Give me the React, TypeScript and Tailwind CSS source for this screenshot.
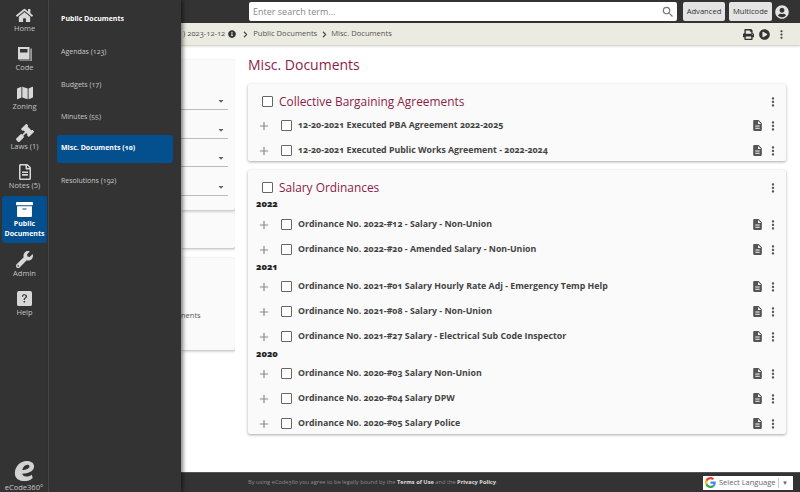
import React from "react";
import { FaHome, FaMap, FaGavel, FaRegFileAlt, FaArchive, FaWrench, FaUserCircle, FaChevronRight, FaPrint, FaPlayCircle, FaInfoCircle, FaCaretDown } from "react-icons/fa";
import { BsQuestionSquareFill } from "react-icons/bs";
import { MdAdd, MdDescription, MdMoreVert, MdSearch } from "react-icons/md";

const font = { fontFamily: '"Open Sans", "Noto Sans", sans-serif' };

function BookIcon() {
  return (
    <svg viewBox="0 0 16 16" className="w-[16px] h-[16px]">
      <path fill="#d8d8d8" d="M1 1h11.5v12.5H1z" />
      <path fill="#9a9a9a" d="M13.2 2.5H15V15H2.5v-.8h10.7z" />
      <path fill="#333" d="M3 3h7.5v3.5H3z" />
    </svg>
  );
}

function Logo() {
  return (
    <svg viewBox="0 0 24 24" className="w-[22px] h-[22px]">
      <path fill="#d2d2d2" d="M15 1c5 0 8 2.500 8 6 0 5-6 7.500-13 8 .6 2 2 3 4.500 3 2.500 0 4.500-.8 6-2l1 3.500C19 21.800 16 23 12 23 6 23 2 19.800 2 14.500 2 7 8 1 15 1z" />
      <path fill="#333" d="M10 11c4.500-.4 8-2 8-4 0-1.200-1-1.800-2.500-1.800C13 5.200 10.800 7.500 10 11z" />
    </svg>
  );
}

function NavItem({ icon, label, h, active }: { icon: React.ReactNode; label: React.ReactNode; h: string; active?: boolean }) {
  return (
    <div className={`flex flex-col items-center justify-center rounded-[3px] mx-[2px] w-[45px] ${h} ${active ? "bg-[#04508f] text-white font-bold" : "text-[#c4c4c4]"}`}>
      <div className="h-[18px] flex items-center justify-center">{icon}</div>
      <div className={`text-center ${active ? "text-[7px] mt-[1px] leading-[10px]" : "text-[7.500px] leading-[9.500px]"}`}>{label}</div>
    </div>
  );
}

function Row({ text }: { text: string }) {
  return (
    <div className="flex items-center h-[25px] pl-[9px] pr-[6px]">
      <MdAdd className="text-[#8a8a8a] text-[14px] w-[14px]" />
      <div className="w-[11px] h-[11px] border border-[#666] rounded-[1px] ml-[10px] bg-white" />
      <div className="ml-[6px] flex-1 text-[8.800px] font-bold text-[#444] oldstyle-nums whitespace-nowrap">{text}</div>
      <MdDescription className="text-[#555] text-[13px]" />
      <MdMoreVert className="text-[#555] text-[14px] ml-[2px]" />
    </div>
  );
}

function Year({ y, h }: { y: string; h: string }) {
  return <div className={`${h} leading-[10px] pl-[8px] text-[9px] font-extrabold text-[#222] oldstyle-nums`}>{y}</div>;
}

function CardHead({ title }: { title: string }) {
  return (
    <div className="flex items-center pl-[14px] pr-[6px] h-[34px] pt-[1px] mb-[-5px]">
      <div className="w-[11px] h-[11px] border border-[#666] rounded-[1px] bg-white" />
      <div className="ml-[6px] flex-1 text-[11.900px] text-[#8c1d47]">{title}</div>
      <MdMoreVert className="text-[#555] text-[14px]" />
    </div>
  );
}

function Peek({ h, children, cls = "" }: { h: string; children?: React.ReactNode; cls?: string }) {
  return <div className={`bg-[#fafafa] shadow-[1px_1px_3px_rgba(0,0,0,0.3)] rounded-r-[2px] ${h} ${cls}`}>{children}</div>;
}

function Select() {
  return (
    <div className="h-[28.400px] pr-[7px] flex flex-col justify-end">
      <div className="flex justify-end pr-[3px]"><FaCaretDown className="text-[#666] text-[8px]" /></div>
      <div className="h-px bg-[#bbb] mt-[4px]" />
    </div>
  );
}

export default function App() {
  return (
    <div className="flex w-[800px] h-[492px] overflow-hidden bg-white relative" style={font}>
      <aside className="w-[49px] shrink-0 bg-[#333333] border-r border-[#4a4a4a] flex flex-col z-10">
        <div className="h-[196px] flex flex-col pt-[1px]">
          <NavItem h="h-[37.500px]" icon={<FaHome className="text-[#d8d8d8] text-[17px]" />} label="Home" />
          <NavItem h="h-[39.500px]" icon={<BookIcon />} label="Code" />
          <NavItem h="h-[39.500px]" icon={<FaMap className="text-[#d8d8d8] text-[16px]" />} label="Zoning" />
          <NavItem h="h-[39.500px]" icon={<FaGavel className="text-[#d8d8d8] text-[18px]" />} label="Laws (1)" />
          <NavItem h="h-[39px]" icon={<FaRegFileAlt className="text-[#d8d8d8] text-[16px]" />} label="Notes (5)" />
        </div>
        <NavItem active h="h-[47px]" icon={<FaArchive className="text-white text-[17px]" />} label={<>Public<br />Documents</>} />
        <div className="flex flex-col pt-[2px]">
          <NavItem h="h-[39px]" icon={<FaWrench className="text-[#d8d8d8] text-[17px]" />} label="Admin" />
          <NavItem h="h-[39px]" icon={<BsQuestionSquareFill className="text-[#d8d8d8] text-[15px]" />} label="Help" />
        </div>
        <div className="mt-auto flex flex-col items-center text-[#c9c9c9]">
          <Logo />
          <div className="text-[7.500px] leading-[10px]">eCode360°</div>
        </div>
      </aside>

      <nav className="w-[132px] shrink-0 bg-[#333333] shadow-[2px_0_4px_rgba(0,0,0,0.5)] z-10 flex flex-col pl-[8px] pr-[8px] text-[#c8c8c8] text-[7px] oldstyle-nums">
        <div className="h-[38px] flex items-center pl-[4px] pt-[1px] font-bold text-white">Public Documents</div>
        <div className="h-[32.500px] flex items-center pl-[4px] mt-[-2px]">Agendas (123)</div>
        <div className="h-[32.500px] flex items-center pl-[4px]">Budgets (17)</div>
        <div className="h-[32.500px] flex items-center pl-[4px]">Minutes (55)</div>
        <div className="h-[28px] mt-[1px] flex items-center pl-[4px] rounded-[3px] bg-[#04508f] text-white font-bold">Misc. Documents (10)</div>
        <div className="h-[38px] flex items-center pl-[4px]">Resolutions (192)</div>
      </nav>

      <div className="flex-1 min-w-0 flex flex-col">
        <header className="h-[23px] shrink-0 bg-[#333333] flex items-center pl-[68px] pr-[10px]">
          <div className="w-[428px] h-[19px] bg-white rounded-[2px] flex items-center pl-[4px] pr-[2px] text-[9px] text-[#888]">
            <span className="flex-1">Enter search term...</span>
            <MdSearch className="text-[#777] text-[14px]" />
          </div>
          <div className="ml-[6px] w-[42px] h-[19px] bg-[#e4e4e4] rounded-[2px] flex items-center justify-center text-[7.600px] text-[#333]">Advanced</div>
          <div className="ml-[4px] w-[43px] h-[19px] bg-[#e4e4e4] rounded-[2px] flex items-center justify-center text-[7.600px] text-[#333]">Multicode</div>
          <FaUserCircle className="ml-[3px] text-[#e4e4e4] text-[14px]" />
        </header>
        <div className="h-[23px] shrink-0 bg-[#ecebe1] border-b border-[#d5d5cc] shadow-[0_1px_2px_rgba(0,0,0,0.1)] flex items-center pl-[2px] pr-[12px] text-[7.600px] text-[#555] oldstyle-nums">
          <span>)</span>
          <span className="ml-[2px]">2023-12-12</span>
          <FaInfoCircle className="ml-[3px] text-[#333] text-[8px]" />
          <FaChevronRight className="ml-[6px] text-[#444] text-[7px]" />
          <span className="ml-[4px]">Public Documents</span>
          <FaChevronRight className="ml-[4px] text-[#444] text-[7px]" />
          <span className="ml-[3px]">Misc. Documents</span>
          <div className="flex-1" />
          <FaPrint className="text-[#333] text-[11px]" />
          <FaPlayCircle className="ml-[5px] text-[#333] text-[11px]" />
          <MdMoreVert className="ml-[5px] text-[#444] text-[13px]" />
        </div>

        <main className="flex-1 min-h-0 flex">
          <div className="w-[54px] shrink-0 pt-[14px] flex flex-col overflow-hidden">
            <Peek h="h-[150px]" cls="pt-[22px]">
              <Select /><Select /><Select /><Select />
            </Peek>
            <Peek h="h-[35px]" cls="mt-[3px]" />
            <Peek h="h-[92px]" cls="mt-[10px] pt-[52px] text-[7.500px] text-[#555]">
              <span>nents</span>
            </Peek>
          </div>
          <div className="flex-1 min-w-0 pl-[13px] pr-[14px]">
            <h1 className="text-[14px] leading-[20px] mt-[9px] text-[#8c1d47] font-normal">Misc. Documents</h1>
            <section className="mt-[9px] h-[77px] bg-[#fafafa] shadow-[0_1px_3px_rgba(0,0,0,0.35)] rounded-[2px]">
              <CardHead title="Collective Bargaining Agreements" />
              <Row text="12-20-2021 Executed PBA Agreement 2022-2025" />
              <Row text="12-20-2021 Executed Public Works Agreement - 2022-2024" />
            </section>
            <section className="mt-[9px] h-[264px] bg-[#fafafa] shadow-[0_1px_3px_rgba(0,0,0,0.35)] rounded-[2px]">
              <CardHead title="Salary Ordinances" />
              <Year y="2022" h="h-[13px]" />
              <Row text="Ordinance No. 2022-#12 - Salary - Non-Union" />
              <Row text="Ordinance No. 2022-#20 - Amended Salary - Non-Union" />
              <Year y="2021" h="h-[12px]" />
              <Row text="Ordinance No. 2021-#01 Salary Hourly Rate Adj - Emergency Temp Help" />
              <Row text="Ordinance No. 2021-#08 - Salary - Non-Union" />
              <Row text="Ordinance No. 2021-#27 Salary - Electrical Sub Code Inspector" />
              <Year y="2020" h="h-[12px]" />
              <Row text="Ordinance No. 2020-#03 Salary Non-Union" />
              <Row text="Ordinance No. 2020-#04 Salary DPW" />
              <Row text="Ordinance No. 2020-#05 Salary Police" />
            </section>
          </div>
        </main>

        <footer className="h-[20px] shrink-0 bg-[#333333] border-t border-[#555] flex items-center pl-[67px] pr-[7px] text-[5.700px] text-[#8a8a8a] oldstyle-nums">
          <span className="flex-1">By using eCode360 you agree to be legally bound by the <b className="text-[#ddd]">Terms of Use</b> and the <b className="text-[#ddd]">Privacy Policy</b>.</span>
          <div className="w-[90px] h-[14px] bg-white flex items-center pl-[2px] text-[7.500px] text-[#666]">
            <svg viewBox="0 0 48 48" className="w-[11px] h-[11px] shrink-0">
              <path fill="#EA4335" d="M24 9.500c3.500 0 6.700 1.300 9.100 3.500l6.800-6.800C35.800 2.400 30.200 0 24 0 14.600 0 6.500 5.400 2.600 13.300l7.900 6.100C12.400 13.700 17.700 9.500 24 9.500z" />
              <path fill="#4285F4" d="M46.900 24.500c0-1.600-.2-3.100-.4-4.500H24v9h12.900c-.6 3-2.200 5.500-4.700 7.200l7.700 6c4.500-4.200 7-10.300 7-17.700z" />
              <path fill="#FBBC05" d="M10.500 28.600c-.5-1.400-.8-3-.8-4.600s.3-3.200.8-4.600l-7.900-6.100C.9 16.500 0 20.100 0 24s.9 7.500 2.600 10.700l7.900-6.100z" />
              <path fill="#34A853" d="M24 48c6.500 0 11.900-2.100 15.900-5.800l-7.700-6c-2.200 1.400-4.900 2.300-8.200 2.300-6.300 0-11.600-4.200-13.500-9.900l-7.900 6.100C6.500 42.600 14.600 48 24 48z" />
            </svg>
            <span className="ml-[3px] flex-1 whitespace-nowrap">Select Language</span>
            <span className="border-l border-[#ccc] pl-[3px] pr-[5px] text-[6px] leading-[10px]">▼</span>
          </div>
        </footer>
      </div>
    </div>
  );
}
